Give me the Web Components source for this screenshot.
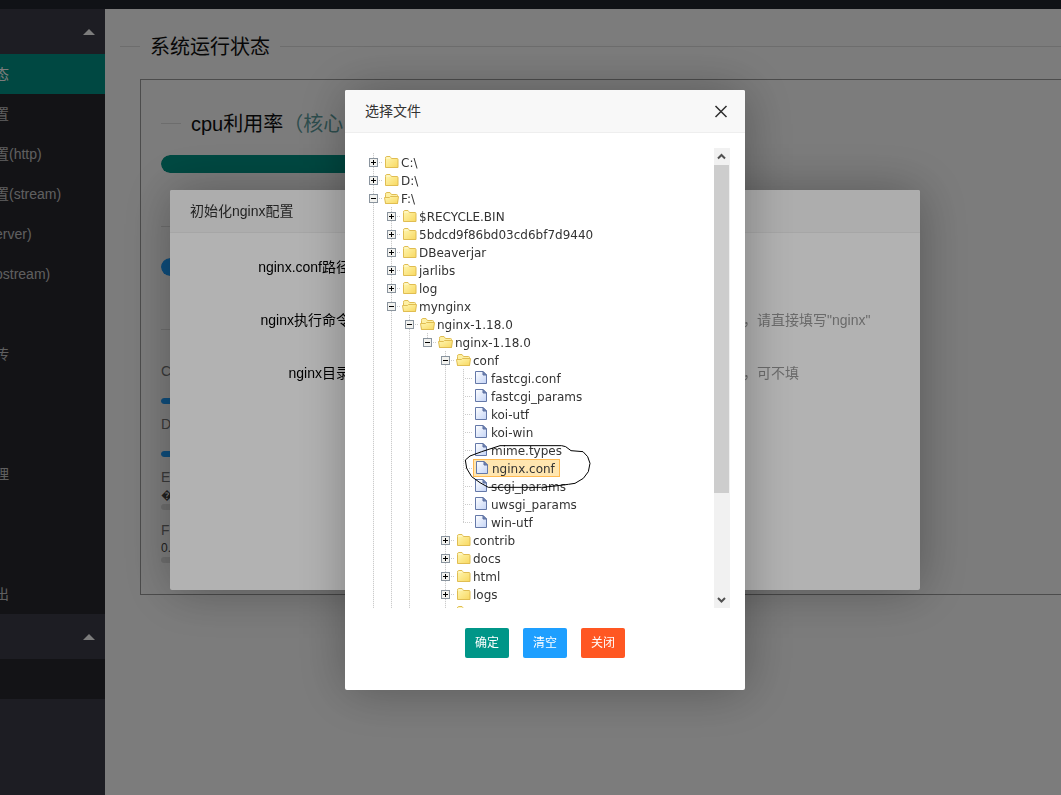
<!DOCTYPE html>
<html lang="zh-CN">
<head>
<meta charset="utf-8">
<title>nginx</title>
<style>
html,body{margin:0;height:100%}
body{font:14px/20px "Liberation Sans","Noto Sans CJK SC",sans-serif;color:#333;overflow:hidden;background:#fff}
</style>
</head>
<body>
<app-shell>
  <side-nav slot="nav"></side-nav>
  <system-status></system-status>
</app-shell>
<modal-layer heading="初始化nginx配置" style="--w:750px;--h:400px"><init-form></init-form></modal-layer>
<modal-layer heading="选择文件" closable style="--w:400px;--h:600px"><file-picker></file-picker></modal-layer>

<script>
function define(name, html, setup) {
  const t = document.createElement('template');
  t.innerHTML = html;
  customElements.define(name, class extends HTMLElement {
    constructor() {
      super();
      this.attachShadow({mode: 'open'}).append(t.content.cloneNode(true));
    }
    connectedCallback() { if (setup) setup(this, this.shadowRoot); }
  });
}

define('app-shell', `
<style>
:host{display:flex;flex-direction:column;min-height:100vh}
header{height:9px;background:#23262e}
.row{display:flex;flex:1}
main{flex:1;min-width:0}
</style>
<header></header>
<div class="row"><slot name="nav"></slot><main><slot></slot></main></div>`);

define('side-nav', `
<style>
:host{display:block;flex:none;width:105px;background:#3d3d49;overflow:hidden}
ul{list-style:none;margin:0;padding:0;background:#29292f}
li{height:40px}
a{display:block;line-height:40px;text-indent:-5px;white-space:nowrap;color:#c4c4c6;text-decoration:none}
a.on{background:#009688;color:#fff}
button{display:flex;align-items:center;justify-content:flex-end;width:100%;height:45px;border:0;padding:0 10px;background:none}
i{border:6px solid transparent;border-top:0;border-bottom-color:#fff}
</style>
<nav>
<button aria-expanded="true"><i></i></button>
<ul>
<li><a class="on" href="#">态</a></li><li><a href="#">置</a></li><li><a href="#">置(http)</a></li>
<li><a href="#">置(stream)</a></li><li><a href="#">erver)</a></li><li><a href="#">pstream)</a></li>
<li></li><li><a href="#">传</a></li><li></li><li></li><li><a href="#">理</a></li><li></li><li></li><li><a href="#">出</a></li>
</ul>
<button aria-expanded="true"><i></i></button>
<ul><li></li></ul>
</nav>`);

define('field-title', `
<style>
:host{display:block}
fieldset{margin:0;padding:0;border:0;border-top:1px solid #e0e0e0;min-width:0}
legend{margin-left:20px;padding:2px 10px 0;font-size:20px;line-height:24px;height:26px;white-space:nowrap;box-sizing:border-box;color:#111}
</style>
<fieldset><legend><slot></slot></legend></fieldset>`);

define('usage-bar', `
<style>
:host{display:block;height:var(--bar,18px);border-radius:9px;background:#e2e2e2;overflow:hidden}
div{width:var(--value,0%);height:100%;border-radius:9px;background:var(--tone,#1e9fff)}
</style><div></div>`);

define('disk-row', `
<style>
:host{display:grid;grid-template-rows:18px 18px 17px}
.name{color:#777;font-size:14px;line-height:18px}
.pct{font-size:12px;line-height:18px;color:#444}
usage-bar{--bar:6px;margin-top:0}
</style>
<span class="name"></span><span class="pct"></span><usage-bar></usage-bar>`, (el, r) => {
  r.querySelector('.name').textContent = el.getAttribute('name');
  r.querySelector('.pct').textContent = el.getAttribute('pct') || '';
});

define('system-status', `
<style>
:host{display:block;padding:24px 0 0 15px}
section{margin:20px 0 0 20px;border:1px solid #9c9c9c;border-right:0;padding:30px 0 20px 20px}
.column{width:60%}
.cores{color:#5f9f9f}
.green{--tone:#009688;--value:90%}
.column > usage-bar{margin:19px 0 40px}
.used{--value:60%}
.disks{margin-top:20px}
</style>
<field-title>系统运行状态</field-title>
<section><div class="column">
<field-title>cpu利用率<span class="cores">（核心</span></field-title>
<usage-bar class="green"></usage-bar>
<field-title></field-title>
<usage-bar class="used"></usage-bar>
<field-title></field-title>
<div class="disks">
<disk-row name="C" class="used"></disk-row>
<disk-row name="D" class="used"></disk-row>
<disk-row name="E" pct="�"></disk-row>
<disk-row name="F" pct="0."></disk-row>
</div>
</div></section>`);

define('modal-layer', `
<style>
:host{position:fixed;inset:0;box-sizing:border-box;display:flex;align-items:center;justify-content:center;padding:0 0 15px 29px;background:rgba(0,0,0,.3)}
article{display:flex;flex-direction:column;width:var(--w);height:var(--h);flex:none;background:#fff;border-radius:2px;box-shadow:1px 1px 50px rgba(0,0,0,.3)}
header{display:flex;align-items:center;justify-content:space-between;height:42px;padding:0 16px 0 20px;background:#f8f8f8;border-bottom:1px solid #eee;border-radius:2px 2px 0 0}
h2{margin:0;font-size:14px;font-weight:400;line-height:42px}
button{display:none;border:0;padding:0;background:none;width:16px;height:16px}
:host([closable]) button{display:block}
svg{display:block}
</style>
<article role="dialog">
<header><h2></h2><button><svg width="16" height="16" viewBox="0 0 16 16"><path d="M2.500 3 13.500 14M13.500 3 2.500 14" stroke="#2d2d2d" stroke-width="1.500" fill="none"/></svg></button></header>
<slot></slot>
</article>`, (el, r) => { r.querySelector('h2').textContent = el.getAttribute('heading'); });

define('init-form', `
<style>
:host{display:block;padding:15px 0}
div{display:grid;grid-template-columns:180px 373px 1fr;align-items:center;height:38px;margin-bottom:15px;white-space:nowrap}
label{text-align:right;color:#000}
input{box-sizing:border-box;width:190px;height:38px;margin-left:15px;border:1px solid #e6e6e6}
span{color:#999;padding-left:20px}
</style>
<div><label for="conf">nginx.conf路径</label><input id="conf"></div>
<div><label for="exe">nginx执行命令</label><input id="exe"><span>，请直接填写"nginx"</span></div>
<div><label for="dir">nginx目录</label><input id="dir"><span>，可不填</span></div>`);

const ICONS = {
  dir: `<svg width="16" height="16" viewBox="0 0 16 16"><path d="M2.500 4.500q0-2 1-2h3.500l1.500 2h5.500q1 0 1 1v8h-12.500z" fill="url(#y)" stroke="#e0bd52"/><path d="M3.500 4h4" stroke="#fffbd8"/></svg>`,
  open: `<svg width="16" height="16" viewBox="0 0 16 16"><path d="M2.500 13.500v-9q0-2 1-2h3.500l1.500 2h5q1 0 1 1v8z" fill="#fdf0a4" stroke="#e0bd52"/><path d="M1.500 7.500h5l1-1h8l-1 7h-12z" fill="url(#y)" stroke="#e0bd52"/></svg>`,
  file: `<svg width="16" height="16" viewBox="0 0 16 16"><path d="M2.500 1.500h7.500l3.500 3.500v8.500h-11z" fill="url(#b)" stroke="#6478a8"/><path d="M10 1.500v3.500h3.500z" fill="#7488b8" stroke="#5b6f9f"/></svg>`
};
const DEFS = `<svg width="0" height="0" style="position:absolute"><defs>
<linearGradient id="y" x1="0" y1="0" x2="1" y2="1"><stop offset="0" stop-color="#fff7b4"/><stop offset="1" stop-color="#f8d860"/></linearGradient>
<linearGradient id="b" x1="0" y1="0" x2="1" y2="1"><stop offset="0" stop-color="#fff"/><stop offset="1" stop-color="#c4d4f6"/></linearGradient></defs></svg>`;

define('tree-node', `
<style>
:host{display:block;--v:repeating-linear-gradient(#ccc 0 1px,#f4f4f4 1px 2px) 8px 0/1px 100% no-repeat;
--hz:repeating-linear-gradient(90deg,#ccc 0 1px,transparent 1px 2px) 8px 9px/10px 1px no-repeat}
.row{display:flex;height:18px}
.sw{flex:none;width:18px;height:18px;background:var(--v),var(--hz)}
:host([last]) .sw{background:repeating-linear-gradient(#ccc 0 1px,#f4f4f4 1px 2px) 8px 0/1px 9px no-repeat,var(--hz)}
.sw svg,.ic svg{display:block}
a{display:flex;box-sizing:border-box;height:18px;color:#333;text-decoration:none;white-space:nowrap;font:12px/20px "DejaVu Sans",sans-serif}
.ic{width:16px;height:16px;margin-right:2px;padding-top:1px}
:host([selected]) a{border:1px solid #ffb951;background:#ffe6b0;padding-right:4px;line-height:18px}
:host([selected]) .ic{padding-top:0}
.kids{padding-left:18px;background:var(--v)}
:host([last]) .kids{background:none}
</style>${DEFS}
<div class="row"><span class="sw"></span><a href="#"><span class="ic"></span><span class="tx"></span></a></div>
<div class="kids"><slot></slot></div>`, (el, r) => {
  const kind = el.getAttribute('kind') || 'dir';
  r.querySelector('.ic').innerHTML = ICONS[kind];
  r.querySelector('.tx').textContent = el.getAttribute('label');
  if (kind !== 'file') r.querySelector('.sw').innerHTML =
    `<svg width="18" height="18" viewBox="0 0 18 18"><rect x="4.500" y="5.500" width="8" height="8" fill="#f2f2ef" stroke="#8a949e"/><path d="M6 9.500h5${kind === 'dir' ? 'M8.500 7v5' : ''}" stroke="#000"/></svg>`;
});

define('scroll-bar', `
<style>
:host{display:flex;flex-direction:column;width:16px;flex:none;background:#f1f1f1}
svg{display:block;flex:none}
.track{flex:1}
.thumb{height:77%;margin:0 1px 0 0;background:#cdcdcd}
</style>
<svg width="16" height="17" viewBox="0 0 16 17"><path d="m4 10.500 3.500-3.500 3.500 3.500" fill="none" stroke="#505050" stroke-width="2"/></svg>
<div class="track"><div class="thumb"></div></div>
<svg width="16" height="17" viewBox="0 0 16 17"><path d="m4 7 3.500 3.500L11 7" fill="none" stroke="#505050" stroke-width="2"/></svg>`);

define('file-picker', `
<style>
:host{display:block;position:relative;padding:15px}
.pane{display:flex;height:460px}
.tree{flex:1;min-width:0;padding:5px 5px 0;overflow:hidden;box-sizing:border-box}
.actions{display:flex;justify-content:center;gap:14px;margin-top:20px}
button{height:30px;padding:0 10px;border:0;border-radius:2px;color:#fff;background:#009688;font:12px/30px "Liberation Sans","Noto Sans CJK SC",sans-serif}
.blue{background:#1e9fff}
.red{background:#ff5722}
.mark{position:absolute;left:10px;top:297px;pointer-events:none}
</style>
<div class="pane">
<div class="tree">
<tree-node label="C:\\"></tree-node>
<tree-node label="D:\\"></tree-node>
<tree-node label="F:\\" kind="open">
 <tree-node label="$RECYCLE.BIN"></tree-node>
 <tree-node label="5bdcd9f86bd03cd6bf7d9440"></tree-node>
 <tree-node label="DBeaverjar"></tree-node>
 <tree-node label="jarlibs"></tree-node>
 <tree-node label="log"></tree-node>
 <tree-node label="mynginx" kind="open">
  <tree-node label="nginx-1.18.0" kind="open">
   <tree-node label="nginx-1.18.0" kind="open" last>
    <tree-node label="conf" kind="open">
     <tree-node label="fastcgi.conf" kind="file"></tree-node>
     <tree-node label="fastcgi_params" kind="file"></tree-node>
     <tree-node label="koi-utf" kind="file"></tree-node>
     <tree-node label="koi-win" kind="file"></tree-node>
     <tree-node label="mime.types" kind="file"></tree-node>
     <tree-node label="nginx.conf" kind="file" selected></tree-node>
     <tree-node label="scgi_params" kind="file"></tree-node>
     <tree-node label="uwsgi_params" kind="file"></tree-node>
     <tree-node label="win-utf" kind="file" last></tree-node>
    </tree-node>
    <tree-node label="contrib"></tree-node>
    <tree-node label="docs"></tree-node>
    <tree-node label="html"></tree-node>
    <tree-node label="logs"></tree-node>
    <tree-node label=""></tree-node>
   </tree-node>
  </tree-node>
 </tree-node>
</tree-node>
</div>
<scroll-bar></scroll-bar>
</div>
<div class="actions"><button>确定</button><button class="blue">清空</button><button class="red">关闭</button></div>
<svg class="mark" width="260" height="190" viewBox="0 0 780 570"><path d="M435 47H620L632 50 648 62 684 65 698 80 705 100 700 125 685 145 660 160 640 163 600 168 560 172H400L375 158 350 140 335 115 331 90 345 78 380 65Z" fill="none" stroke="#000" stroke-width="3"/></svg>`);
</script>
</body>
</html>
